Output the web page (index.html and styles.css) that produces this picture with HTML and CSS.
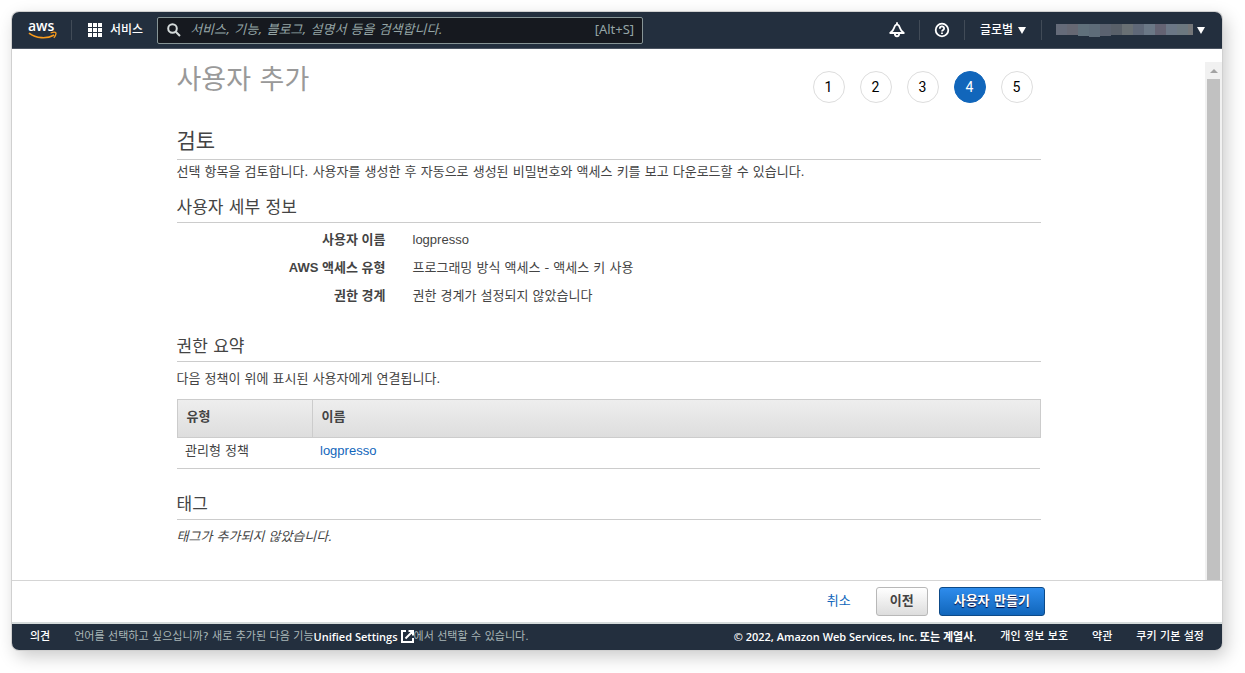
FILE: index.html
```
<!DOCTYPE html>
<html lang="ko">
<head>
<meta charset="utf-8">
<meta name="viewport" content="width=device-width, initial-scale=1">
<title>사용자 추가</title>
<link rel="stylesheet" href="styles.css">
</head>
<body>
<div class="window">
  <header class="topbar">
    <a class="logo" href="#" aria-label="AWS">
      <svg width="30" height="28" viewBox="0 0 30 28">
        <text class="logo-text" x="0" y="15">aws</text>
        <path d="M1 17.2C8 22.6 19 23.2 26.2 19" fill="none" stroke="#f79a1c" stroke-width="1.7"/>
        <path d="M22.6 17C25 16.2 27.4 16.2 27.9 16.8C28.3 17.6 27.4 20.2 25.8 21.8" fill="none" stroke="#f79a1c" stroke-width="1.3"/>
      </svg>
    </a>
    <span class="divider"></span>
    <button class="services" type="button">
      <svg width="15" height="15" viewBox="0 0 15 15" fill="#fff">
        <path d="M0 0h4v4H0zM5 0h4v4H5zM10 0h4v4h-4zM0 5h4v4H0zM5 5h4v4H5zM10 5h4v4h-4zM0 10h4v4H0zM5 10h4v4H5zM10 10h4v4h-4z"/>
      </svg>
      <span class="label">서비스</span>
    </button>
    <label class="search">
      <svg width="14" height="14" viewBox="0 0 14 14" fill="none" stroke="#d5dbdb" stroke-width="2">
        <circle cx="5.5" cy="5.5" r="4.3"/><path d="M8.7 8.7L13 13"/>
      </svg>
      <input class="search-input" type="text" aria-label="검색" placeholder="서비스, 기능, 블로그, 설명서 등을 검색합니다.">
      <span class="shortcut">[Alt+S]</span>
    </label>
    <div class="tools">
      <button class="tool" type="button" aria-label="알림">
        <svg width="16" height="16" viewBox="0 0 16 16" fill="none" stroke="#fff" stroke-width="1.8" stroke-linejoin="round">
          <path d="M8 2.2C6.4 2.8 5.4 4.2 4.9 6.2C4.4 8.2 3 9.6 1.2 11H14.8C13 9.6 11.6 8.2 11.1 6.2C10.6 4.2 9.6 2.8 8 2.2z"/>
          <path d="M8 .3V2.4"/><path d="M5.8 11.6C5.8 15.2 10.2 15.2 10.2 11.6"/>
        </svg>
      </button>
      <span class="divider"></span>
      <button class="tool" type="button" aria-label="도움말">
        <svg width="16" height="16" viewBox="0 0 16 16" fill="none" stroke="#fff" stroke-width="1.8">
          <circle cx="8" cy="8" r="6.3"/>
          <path d="M5.8 6.7C5.9 3.7 10.2 3.8 10.1 6.5C10.1 8 8 7.8 8 9.5"/><path d="M8 10.4V12"/>
        </svg>
      </button>
      <span class="divider"></span>
      <button class="tool region" type="button"><span class="label">글로벌</span><span class="caret"></span></button>
      <span class="divider"></span>
      <button class="tool account" type="button" aria-label="계정">
        <svg width="137" height="13" viewBox="0 0 137 13">
          <path fill="#656b79" d="M0 0h11v11H0z"/><path fill="#666873" d="M11 0h11v11H11z"/>
          <path fill="#60707b" d="M22 0h11v12H22z"/><path fill="#5e6c79" d="M33 0h11v13H33z"/>
          <path fill="#5b626f" d="M44 0h11v12H44z"/><path fill="#596069" d="M55 0h11v11H55z"/>
          <path fill="#697074" d="M66 0h11v11H66z"/><path fill="#5f6878" d="M77 0h11v11H77z"/>
          <path fill="#6b7886" d="M88 0h11v11H88z"/><path fill="#646373" d="M99 0h11v11H99z"/>
          <path fill="#6b7786" d="M110 0h11v11h-11z"/><path fill="#6c7880" d="M121 0h11v11h-11z"/>
          <path fill="#747678" d="M132 0h5v11h-5z"/>
        </svg>
        <span class="caret"></span>
      </button>
    </div>
  </header>

  <div class="viewport">
    <main class="content">
      <div class="page-head">
        <h1 class="title">사용자 추가</h1>
        <ol class="steps">
          <li class="step">1</li>
          <li class="step">2</li>
          <li class="step">3</li>
          <li class="step current" aria-current="step">4</li>
          <li class="step">5</li>
        </ol>
      </div>

      <h2 class="heading">검토</h2>
      <p class="text">선택 항목을 검토합니다. 사용자를 생성한 후 자동으로 생성된 비밀번호와 액세스 키를 보고 다운로드할 수 있습니다.</p>

      <section class="section details">
        <h3 class="subheading">사용자 세부 정보</h3>
        <dl class="fields">
          <dt>사용자 이름</dt><dd class="latin">logpresso</dd>
          <dt>AWS 액세스 유형</dt><dd>프로그래밍 방식 액세스 - 액세스 키 사용</dd>
          <dt>권한 경계</dt><dd>권한 경계가 설정되지 않았습니다</dd>
        </dl>
      </section>

      <section class="section">
        <h3 class="subheading">권한 요약</h3>
        <p class="text">다음 정책이 위에 표시된 사용자에게 연결됩니다.</p>
        <table class="policies">
          <thead><tr><th class="col-type" scope="col">유형</th><th scope="col">이름</th></tr></thead>
          <tbody><tr><td>관리형 정책</td><td class="latin"><a class="link" href="#">logpresso</a></td></tr></tbody>
        </table>
      </section>

      <section class="section">
        <h3 class="subheading">태그</h3>
        <p class="text empty">태그가 추가되지 않았습니다.</p>
      </section>
    </main>
    <div class="scrollbar" aria-hidden="true">
      <span class="scroll-up"></span>
      <span class="scroll-thumb"></span>
    </div>
  </div>

  <div class="actions">
    <div class="actions-inner">
      <a class="link cancel" href="#">취소</a>
      <button class="btn" type="button">이전</button>
      <button class="btn primary" type="button">사용자 만들기</button>
    </div>
  </div>

  <footer class="footer">
    <a class="foot-link" href="#">의견</a>
    <p class="notice"><span>언어를 선택하고 싶으십니까? 새로 추가된 다음 기능</span><a class="foot-link settings" href="#">Unified Settings
      <svg width="13" height="13" viewBox="0 0 13 13" fill="none" stroke="#fff" stroke-width="2">
        <path d="M5 1H1V12H12V8M7.5 1H12V5.5M12 1L4.5 8.5"/>
      </svg></a><span>에서 선택할 수 있습니다.</span></p>
    <div class="legal">
      <span class="copyright">© 2022, Amazon Web Services, Inc. 또는 계열사.</span>
      <a class="foot-link" href="#">개인 정보 보호</a>
      <a class="foot-link" href="#">약관</a>
      <a class="foot-link" href="#">쿠키 기본 설정</a>
    </div>
  </footer>
</div>
</body>
</html>
```
FILE: styles.css
```
* { box-sizing: border-box; }

body {
  margin: 0;
  min-height: 100vh;
  padding: 12px 23px 23px 12px;
  display: flex;
  background: #fff;
  color: #444;
  font: 13px/24px "DejaVu Sans", "Noto Sans CJK KR", sans-serif;
}

h1, h2, h3, p, dl, dd, ol { margin: 0; padding: 0; font-weight: 400; }
h1, h2, h3 { font-family: "DejaVu Sans", "Noto Sans CJK KR", sans-serif; }
button { margin: 0; padding: 0; border: 0; background: none; font: inherit; cursor: pointer; }
a { text-decoration: none; }
svg { display: block; flex: none; }

.window {
  flex: 1;
  min-width: 0;
  display: flex;
  flex-direction: column;
  border-radius: 7px;
  overflow: hidden;
  background: #fff;
  box-shadow: 0 0 0 1px #d0d0d0, 4px 6px 18px rgba(0, 0, 0, 0.22);
}

/* top bar */
.topbar {
  height: 37px;
  display: flex;
  align-items: center;
  padding: 0 17px 0 16px;
  background: #232f3e;
  border-bottom: 1px solid #4c5562;
  color: #fff;
  font: 12px/22px "Noto Sans CJK KR", sans-serif;
}
.logo-text { fill: #fff; font: 600 14px "Open Sans", sans-serif; }
.divider { width: 1px; height: 20px; background: #414b57; }
.logo + .divider { margin: 0 16px 0 13px; }
.label { padding-bottom: 2px; }
.services { display: flex; align-items: center; gap: 7px; color: #fff; font-weight: 500; }
.search {
  width: 486px;
  height: 27px;
  margin-left: 14px;
  padding: 0 8px 0 9px;
  display: flex;
  align-items: center;
  gap: 9px;
  border: 1px solid #879596;
  border-radius: 2px;
  background: #16191f;
}
.search-input {
  flex: 1;
  min-width: 0;
  padding: 0;
  border: 0;
  outline: 0;
  background: none;
  color: #fff;
  font: 13px/20px "DejaVu Sans", "Noto Sans CJK KR", sans-serif;
}
.search-input::placeholder { color: #95a5a6; font-style: italic; opacity: 1; }
.shortcut { padding-bottom: 2px; color: #95a5a6; font: 13px/20px "Noto Sans", sans-serif; }
.tools { margin-left: auto; display: flex; align-items: center; gap: 14px; }
.tool { display: flex; align-items: center; color: #fff; }
.region { gap: 5px; margin: 0 1px; font-weight: 500; }
.account { gap: 4px; }
.caret { border: 4px solid transparent; border-top: 7px solid #fff; border-bottom: 0; }

/* scrolling area */
.viewport { flex: 1; display: flex; }
.content { flex: 1; min-width: 0; max-width: 864px; margin: 0 auto; padding: 8px 0 24px; }
.scrollbar {
  width: 17px;
  margin-top: 13px;
  padding: 0 2px;
  display: flex;
  flex-direction: column;
  align-items: center;
  background: #f1f1f1;
}
.scroll-up { margin: 7px 0 6px; border: 4px solid transparent; border-top: 0; border-bottom: 4px solid #a3a3a3; }
.scroll-thumb { flex: 1; width: 100%; background: #c1c1c1; }

.page-head { display: flex; justify-content: space-between; padding-right: 8px; margin-bottom: 20px; }
.title { color: #999; font-size: 27px; line-height: 46px; }
.steps { display: flex; gap: 15px; padding-top: 14px; list-style: none; }
.step {
  width: 32px;
  height: 32px;
  border: 1px solid #ddd;
  border-radius: 50%;
  color: #000;
  font: 14px/30px Roboto, sans-serif;
  text-align: center;
}
.step.current { border-color: #1166bb; background: #1166bb; color: #fff; }

.heading { font-size: 21px; line-height: 36px; border-bottom: 1px solid #ccc; }
.section { margin-top: 20px; }
.details { margin-top: 8px; }
.subheading { font-size: 17px; line-height: 30px; border-bottom: 1px solid #ccc; }
.subheading + .text { margin-top: 5px; }
.fields {
  display: grid;
  grid-template-columns: 209px 1fr;
  align-items: baseline;
  column-gap: 27px;
  padding: 3px 0 1px;
  line-height: 28px;
}
.fields dt, .policies th { font-family: "DejaVu Sans", "Noto Sans CJK KR", sans-serif; font-weight: 700; }
.fields dt { text-align: right; font-family: "Liberation Sans", "Noto Sans CJK KR", sans-serif; }
.latin { font-family: "Liberation Sans", sans-serif; }
.empty { font-style: italic; }
.link { color: #1166bb; }

.policies { width: 100%; margin-top: 8px; border-collapse: collapse; text-align: left; }
.policies thead { background: linear-gradient(#eee, #ddd); }
.policies th { padding: 0 9px 3px; border: 1px solid #ccc; line-height: 34px; }
.policies td { padding: 0 8px 4px; border-bottom: 1px solid #ccc; line-height: 26px; vertical-align: baseline; }
.col-type { width: 135px; }

/* action bar */
.actions { padding: 6px 0; border-top: 1px solid #d5d5d5; border-bottom: 2px solid #d5dbdb; }
.actions-inner {
  max-width: 864px;
  margin: 0 auto;
  padding-right: 4px;
  display: flex;
  justify-content: flex-end;
  align-items: center;
}
.cancel { margin-right: 25px; padding-bottom: 2px; }
.btn {
  height: 29px;
  padding: 0 13px 2px;
  border: 1px solid #b8b8b8;
  border-radius: 3px;
  background: linear-gradient(#fff, #ddd);
  color: #444;
  font: 700 13px/24px "DejaVu Sans", "Noto Sans CJK KR", sans-serif;
}
.primary {
  margin-left: 11px;
  padding: 0 14px 2px;
  border-color: #0d4a88;
  background: linear-gradient(#2e8cec, #1166bb);
  color: #fff;
  text-shadow: 0 1px 1px #003;
}

/* footer */
.footer {
  height: 26px;
  display: flex;
  align-items: center;
  padding: 0 18px 1px;
  background: #232f3e;
  color: #fff;
  font-size: 11px;
  font-weight: 500;
  white-space: nowrap;
}
.foot-link { color: #fff; }
.notice { display: flex; align-items: center; margin-left: 24px; color: #aab7b8; }
.settings { display: flex; align-items: center; gap: 3px; font: 600 11px/24px "Open Sans", sans-serif; }
.legal { margin-left: auto; display: flex; gap: 24px; }
.copyright { font: 600 11px/24px "Open Sans", "Noto Sans CJK KR", sans-serif; }
```
